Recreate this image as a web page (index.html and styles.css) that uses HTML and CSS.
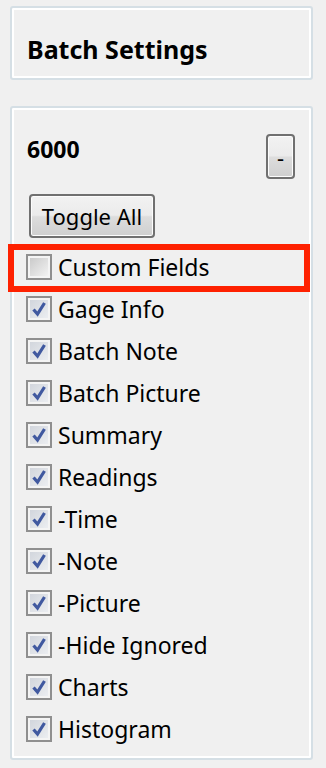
FILE: index.html
```html
<!DOCTYPE html>
<html lang="en">
<head>
    <meta charset="UTF-8">
    <meta name="viewport" content="width=device-width, initial-scale=1.0">
    <title>Batch Settings</title>
    <link rel="stylesheet" href="styles.css">
</head>
<body>
    <div class="group title-box">
        <h2>Batch Settings</h2>
    </div>

    <div class="group settings">
        <div class="header">
            <span class="batch-no">6000</span>
            <button class="btn btn-collapse">-</button>
        </div>
        <button class="btn btn-toggle">Toggle All</button>

        <ul class="options">
            <li class="option highlighted">
                <span class="check"></span>
                <span class="label">Custom Fields</span>
                <span class="highlight"></span>
            </li>
            <li class="option"><span class="check checked"></span><span class="label">Gage Info</span></li>
            <li class="option"><span class="check checked"></span><span class="label">Batch Note</span></li>
            <li class="option"><span class="check checked"></span><span class="label">Batch Picture</span></li>
            <li class="option"><span class="check checked"></span><span class="label">Summary</span></li>
            <li class="option"><span class="check checked"></span><span class="label">Readings</span></li>
            <li class="option"><span class="check checked"></span><span class="label">-Time</span></li>
            <li class="option"><span class="check checked"></span><span class="label">-Note</span></li>
            <li class="option"><span class="check checked"></span><span class="label">-Picture</span></li>
            <li class="option"><span class="check checked"></span><span class="label">-Hide Ignored</span></li>
            <li class="option"><span class="check checked"></span><span class="label">Charts</span></li>
            <li class="option"><span class="check checked"></span><span class="label">Histogram</span></li>
        </ul>
    </div>

    <script>
        // draw the tick inside every checked box
        const tick = '<svg viewBox="0 0 18 18" width="18" height="18"><path d="M3.5 9.5 L7.5 14 L14.5 3" fill="none" stroke="#4059a0" stroke-width="3.2"/></svg>';
        document.querySelectorAll('.check.checked').forEach(box => {
            box.innerHTML = tick;
        });
    </script>
</body>
</html>
```

FILE: styles.css
```css
* {
    margin: 0;
    padding: 0;
    box-sizing: border-box;
}

body {
    background: #f0f0f0;
    padding: 6px 13px 0 10px;
    font-family: "Noto Sans", "Open Sans", sans-serif;
    font-size: 23px;
    color: #000;
}

/* etched group box like the windows one */
.group {
    border: 2px solid #d5dfe5;
    border-radius: 3px;
    box-shadow: inset 0 0 0 2px #fff;
}

.title-box {
    height: 74px;
    padding: 26px 0 0 15px;
}

h2 {
    font-size: 25px;
    font-weight: bold;
    line-height: 30px;
}

.settings {
    position: relative;
    height: 654px;
    margin-top: 26px;
    padding: 26px 16px 8px 14px;
}

.header {
    display: flex;
    justify-content: space-between;
    align-items: flex-start;
}

.batch-no {
    font-weight: bold;
    line-height: 30px;
    margin-left: 1px;
}

.btn {
    font-family: inherit;
    font-size: 22px;
    color: #000;
    border: 2px solid #707070;
    border-radius: 4px;
    background: linear-gradient(#f2f2f2 0%, #ebebeb 48%, #dddddd 52%, #cfcfcf 100%);
    box-shadow: inset 0 0 0 1px #fcfcfc;
    cursor: pointer;
}

.btn-collapse {
    width: 29px;
    height: 45px;
    line-height: 1;
}

.btn-toggle {
    display: block;
    width: 126px;
    height: 44px;
    margin: 15px 0 0 3px;
}

.options {
    list-style: none;
    margin-top: 8px;
}

.option {
    position: relative;
    display: flex;
    align-items: center;
    gap: 6px;
    height: 42px;
}

.check {
    width: 26px;
    height: 26px;
    flex-shrink: 0;
    border: 2px solid #8f8f8f;
    background: #f4f4f4;
    box-shadow: inset 0 0 0 2px #f4f4f4;
    display: flex;
    align-items: center;
    justify-content: center;
}

.check:not(.checked) {
    background: linear-gradient(135deg, #c6c6c6, #f6f6f6);
}

.check.checked {
    background: linear-gradient(135deg, #cfd3da, #eef0f3);
}

.label {
    line-height: 30px;
}

/* red annotation drawn over the first row */
.highlight {
    position: absolute;
    left: -18px;
    top: -2px;
    width: 302px;
    height: 48px;
    border: 6px solid #fe2100;
}
```
